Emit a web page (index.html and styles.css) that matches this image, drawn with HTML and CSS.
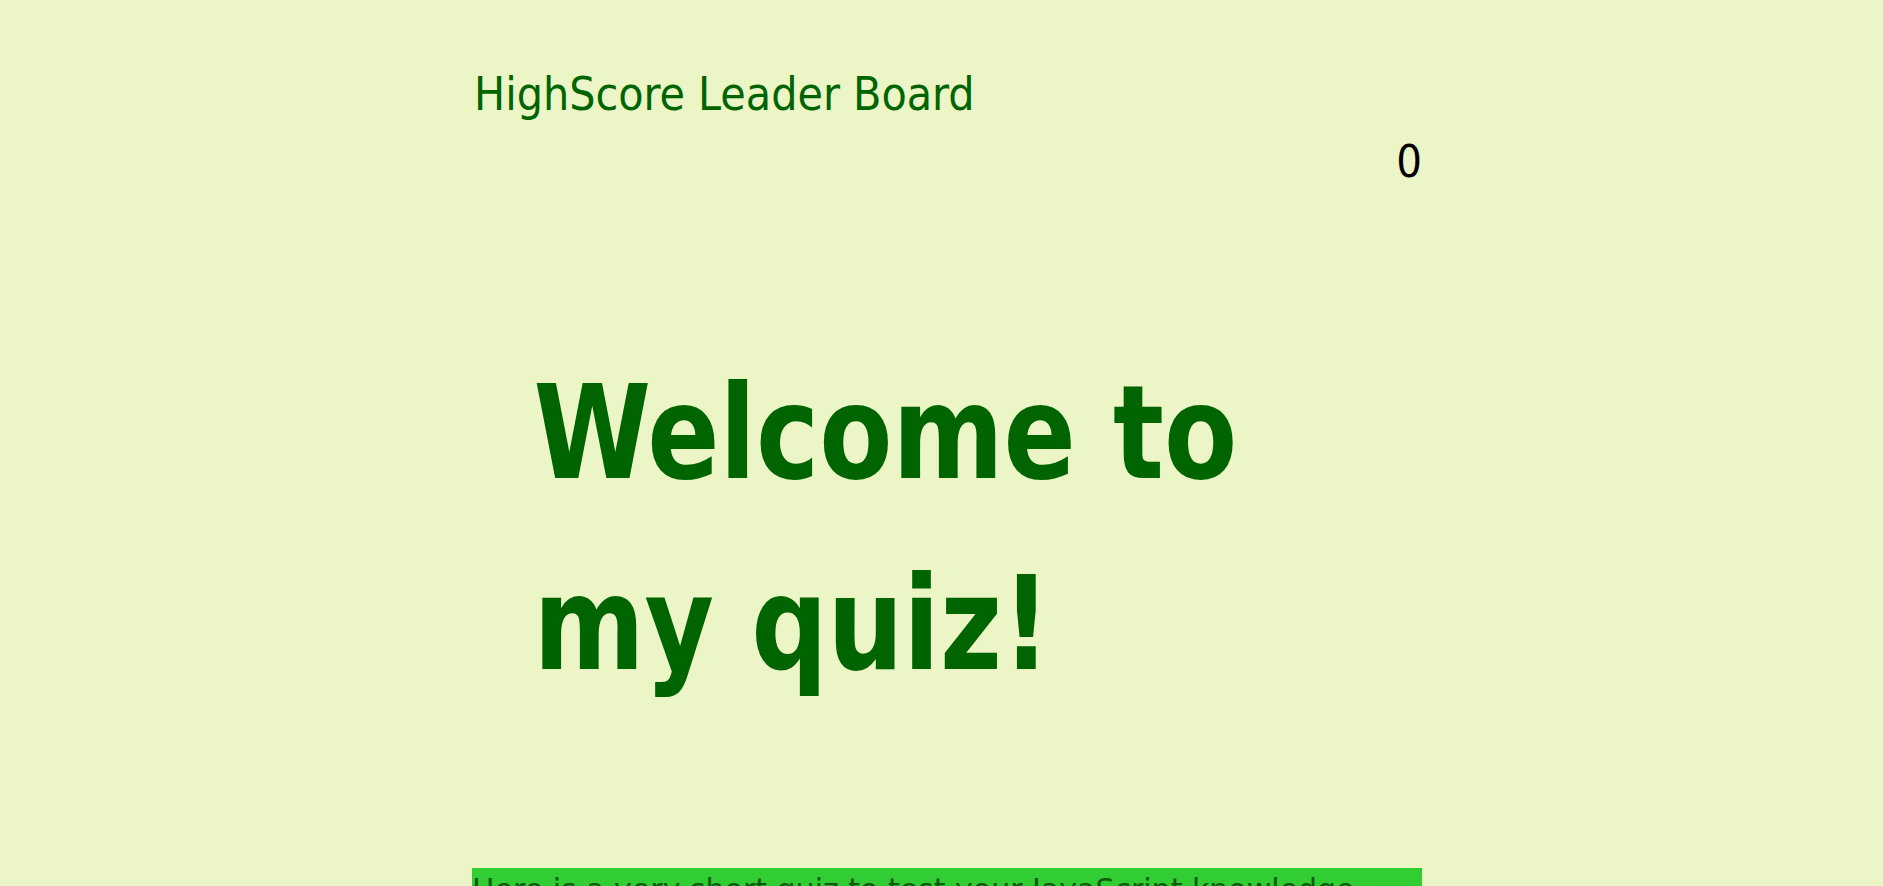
FILE: index.html
```html
<!DOCTYPE html>
<html lang="en">
<head>
<meta charset="utf-8">
<title>Quiz</title>
<link rel="stylesheet" href="styles.css">
</head>
<body>
<div class="page">
  <header class="top">
    <a class="leader" href="#">HighScore Leader Board</a>
    <div class="timer">0</div>
  </header>
  <main class="intro">
    <h1 class="title">Welcome to my quiz!</h1>
    <p class="blurb">Here is a very short quiz to test your JavaScript knowledge. Good luck!</p>
  </main>
</div>
</body>
</html>
```
FILE: styles.css
```css
html, body {
  margin: 0;
  padding: 0;
}
body {
  background: #ebf5c6;
  font-family: "DejaVu Sans", sans-serif;
  color: #006400;
}
.page {
  width: 950px;
  margin-left: 472px;
  padding-top: 68px;
}
.top {
  display: flex;
  flex-direction: column;
  gap: 15px;
}
.leader {
  display: block;
  font-family: "DejaVu Sans Condensed", "DejaVu Sans", sans-serif;
  font-stretch: condensed;
  font-size: 46px;
  line-height: 53px;
  color: #006400;
  text-decoration: none;
  padding-left: 2px;
}
.timer {
  align-self: flex-end;
  font-family: "DejaVu Sans Condensed", "DejaVu Sans", sans-serif;
  font-stretch: condensed;
  font-size: 45px;
  line-height: 52px;
  color: #000;
}
.intro {
  margin-top: 150px;
}
.title {
  margin: 0;
  padding-left: 75px;
  font-family: "DejaVu Sans", sans-serif;
  font-weight: bold;
  font-size: 130px;
  line-height: 191px;
  color: #006400;
  transform: scaleX(0.82);
  transform-origin: left top;
  width: 870px;
}
.blurb {
  margin: 148px 0 0;
  padding: 4px 0 20px;
  background: #32cd32;
  font-size: 30px;
  color: #0b5c0b;
}
```
